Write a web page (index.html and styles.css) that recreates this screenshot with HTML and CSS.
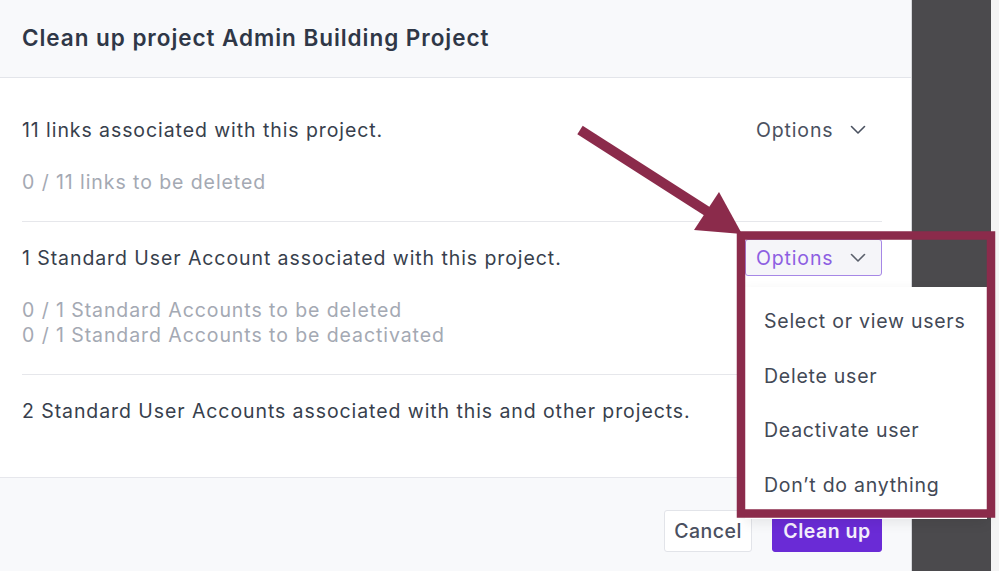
FILE: index.html
```html
<!DOCTYPE html>
<html>
<head>
<meta charset="utf-8">
<link rel="stylesheet" href="styles.css">
</head>
<body>
<div class="screen">
  <div class="dialog">
    <div class="header"><h1 class="title">Clean up project Admin Building Project</h1></div>
    <div class="content">
      <div class="section">
        <div class="row">
          <span class="label">11 links associated with this project.</span>
          <button class="opts">Options <svg class="chev" viewBox="0 0 16 10" width="16" height="10"><path d="M1.5 1.5 L8 8 L14.5 1.5" fill="none" stroke="currentColor" stroke-width="1.6" stroke-linecap="round" stroke-linejoin="round"/></svg></button>
        </div>
        <div class="sub">0 / 11 links to be deleted</div>
      </div>
      <div class="section">
        <div class="row">
          <span class="label">1 Standard User Account associated with this project.</span>
          <div class="optwrap">
            <button class="opts active">Options <svg class="chev" viewBox="0 0 16 10" width="16" height="10"><path d="M1.5 1.5 L8 8 L14.5 1.5" fill="none" stroke="#5a5f6b" stroke-width="1.6" stroke-linecap="round" stroke-linejoin="round"/></svg></button>
            <ul class="menu">
              <li>Select or view users</li>
              <li>Delete user</li>
              <li>Deactivate user</li>
              <li>Don’t do anything</li>
            </ul>
          </div>
        </div>
        <div class="sub">0 / 1 Standard Accounts to be deleted<br>0 / 1 Standard Accounts to be deactivated</div>
      </div>
      <div class="section last">
        <div class="row">
          <span class="label">2 Standard User Accounts associated with this and other projects.</span>
        </div>
      </div>
    </div>
    <div class="footer">
      <button class="btn cancel">Cancel</button>
      <button class="btn primary">Clean up</button>
    </div>
  </div>
  <div class="dark"></div>
  <div class="edge"></div>
  <svg class="annot" viewBox="0 0 999 571" width="999" height="571">
    <line x1="580" y1="130" x2="716" y2="217" stroke="#8b2b4b" stroke-width="10"/>
    <polygon points="719,192 694,230 742,234" fill="#8b2b4b"/>
    <rect x="741" y="235.5" width="250" height="278" fill="none" stroke="#8b2b4b" stroke-width="8.5"/>
  </svg>
</div>
</body>
</html>
```
FILE: styles.css
```css
* { box-sizing: border-box; }
html, body { margin: 0; padding: 0; }
body {
  font-family: Inter, "Noto Sans", "Liberation Sans", sans-serif;
  background: #f2f2f2;
  width: 999px;
  height: 571px;
  overflow: hidden;
}
.screen {
  position: relative;
  display: flex;
  width: 999px;
  height: 571px;
}
.dialog {
  width: 912px;
  height: 571px;
  background: #fff;
  border-right: 1px solid #d6d7db;
  display: flex;
  flex-direction: column;
}
.header {
  height: 78px;
  background: #f8f9fb;
  border-bottom: 1px solid #e3e5ea;
  display: flex;
  align-items: center;
  padding: 0 22px;
}
.title {
  margin: 0;
  font-size: 22.5px;
  font-weight: 600;
  color: #2f3747;
  letter-spacing: 0.95px;
  padding-bottom: 2px;
  white-space: nowrap;
}
.content {
  padding: 16px 29px 22px 22px;
}
.section {
  padding: 17px 0 26px;
  border-bottom: 1px solid #e6e7eb;
}
.section.last {
  border-bottom: none;
}
.row {
  display: flex;
  align-items: center;
  justify-content: space-between;
  height: 37px;
}
.label {
  font-size: 19.5px;
  letter-spacing: 0.92px;
  color: #383f4d;
  white-space: nowrap;
}
.sub {
  margin-top: 22px;
  font-size: 19.5px;
  letter-spacing: 0.92px;
  line-height: 25px;
  color: #a4a9b3;
}
.optwrap {
  position: relative;
}
.opts {
  font-family: inherit;
  font-size: 19.5px;
  letter-spacing: 0.85px;
  color: #4a5160;
  background: transparent;
  border: 1px solid transparent;
  border-radius: 3px;
  height: 37px;
  width: 137px;
  padding: 0 10px;
  display: flex;
  align-items: center;
  justify-content: space-between;
  cursor: pointer;
}
.opts.active {
  background: #f5f5f9;
  border-color: #a687e6;
  color: #8d5fe2;
}
.chev {
  color: #4a5160;
  margin-right: 5px;
}
.menu {
  position: absolute;
  left: 0;
  top: 48px;
  width: 242px;
  margin: 0;
  padding: 7px 0;
  list-style: none;
  background: #fff;
  box-shadow: 0 4px 12px rgba(0,0,0,0.08);
  z-index: 2;
}
.menu li {
  height: 54.5px;
  line-height: 54.5px;
  padding-left: 19px;
  font-size: 19.5px;
  letter-spacing: 0.75px;
  color: #434956;
  white-space: nowrap;
}
.footer {
  flex: 1;
  background: #f8f9fb;
  border-top: 1px solid #e6e7ec;
  display: flex;
  justify-content: flex-end;
  align-items: flex-start;
  gap: 20px;
  padding: 32px 29px 0 0;
}
.btn {
  font-family: inherit;
  font-size: 19.5px;
  letter-spacing: 0.5px;
  height: 42px;
  border-radius: 3px;
  cursor: pointer;
  padding: 0;
}
.cancel {
  width: 88px;
  background: #fff;
  border: 1px solid #e2e4e9;
  color: #4a5060;
  font-weight: 500;
}
.primary {
  width: 110px;
  background: #6a2bd6;
  border: 1px solid #6a2bd6;
  color: #f3effc;
  font-weight: 600;
}
.dark {
  width: 79px;
  height: 571px;
  background: #4b4a4d;
}
.edge {
  flex: 1;
  background: #f4f4f4;
}
.annot {
  position: absolute;
  left: 0;
  top: 0;
  pointer-events: none;
  z-index: 5;
}
```
